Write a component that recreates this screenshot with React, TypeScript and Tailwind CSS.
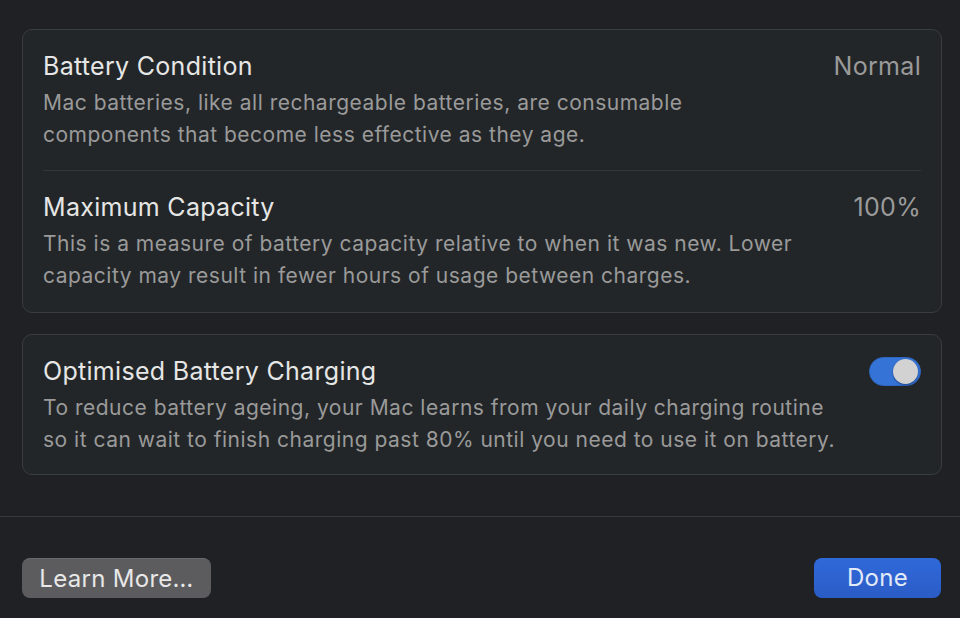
import React from 'react';

const font = { fontFamily: 'Inter, "Noto Sans", sans-serif' };

interface Row {
  title: string;
  value: string;
  lines: string[];
}

const rows: Row[] = [
  {
    title: 'Battery Condition',
    value: 'Normal',
    lines: [
      'Mac batteries, like all rechargeable batteries, are consumable',
      'components that become less effective as they age.',
    ],
  },
  {
    title: 'Maximum Capacity',
    value: '100%',
    lines: [
      'This is a measure of battery capacity relative to when it was new. Lower',
      'capacity may result in fewer hours of usage between charges.',
    ],
  },
];

const Toggle: React.FC = () => (
  <div className="w-[52px] h-[29px] rounded-full bg-[#3574d6] border border-[#2f66c2] flex items-center justify-end pr-[2px]">
    <div className="w-[25px] h-[25px] rounded-full bg-[#d2d2d2] shadow-[0_1px_2px_rgba(0,0,0,0.4)]" />
  </div>
);

const Section: React.FC<{ row: Row; right?: React.ReactNode; pb?: string }> = ({ row, right, pb }) => (
  <div className={`pt-[20px] ${pb ?? 'pb-[20px]'}`}>
    <div className="flex items-center justify-between">
      <div className="text-[25px] leading-[32px] text-[#e6e6e6] tracking-[0.3px]">{row.title}</div>
      {right ?? (
        <div className="text-[25px] leading-[32px] text-[#9a9a9a] tracking-[0.3px]">{row.value}</div>
      )}
    </div>
    <div className="mt-[5px] text-[21px] leading-[32px] text-[#9a9a9a] tracking-[0.5px]">
      {row.lines.map((l) => (
        <div key={l}>{l}</div>
      ))}
    </div>
  </div>
);

export default function App() {
  return (
    <div style={font} className="w-[960px] h-[618px] bg-[#1f2124] flex flex-col overflow-hidden">
      <div className="pl-[22px] pr-[18px] pt-[29px] flex flex-col gap-[21px]">
        <div className="rounded-[10px] border border-[#3a3d40] bg-[#232628] px-[20px]">
          <Section row={rows[0]} pb="pb-[19px]" />
          <div className="h-px bg-[#343638]" />
          <Section row={rows[1]} pb="pb-[20px]" />
        </div>
        <div className="rounded-[10px] border border-[#3a3d40] bg-[#232628] px-[20px]">
          <Section
            row={{
              title: 'Optimised Battery Charging',
              value: '',
              lines: [
                'To reduce battery ageing, your Mac learns from your daily charging routine',
                'so it can wait to finish charging past 80% until you need to use it on battery.',
              ],
            }}
            right={<Toggle />}
            pb="pb-[18px]"
          />
        </div>
      </div>
      <div className="mt-[41px] h-px bg-[#37393b]" />
      <div className="pl-[22px] pr-[19px] pt-[41px] flex justify-between">
        <button className="h-[40px] w-[189px] rounded-[8px] bg-[#5c5c5e] text-[24px] text-[#e8e8e8] tracking-[0.3px] border-t border-[#6a6a6c]">
          Learn More…
        </button>
        <button className="h-[40px] w-[127px] rounded-[8px] bg-gradient-to-b from-[#3069da] to-[#2b5cc6] text-[24px] text-[#e2eaf8] tracking-[0.3px]">
          Done
        </button>
      </div>
    </div>
  );
}
